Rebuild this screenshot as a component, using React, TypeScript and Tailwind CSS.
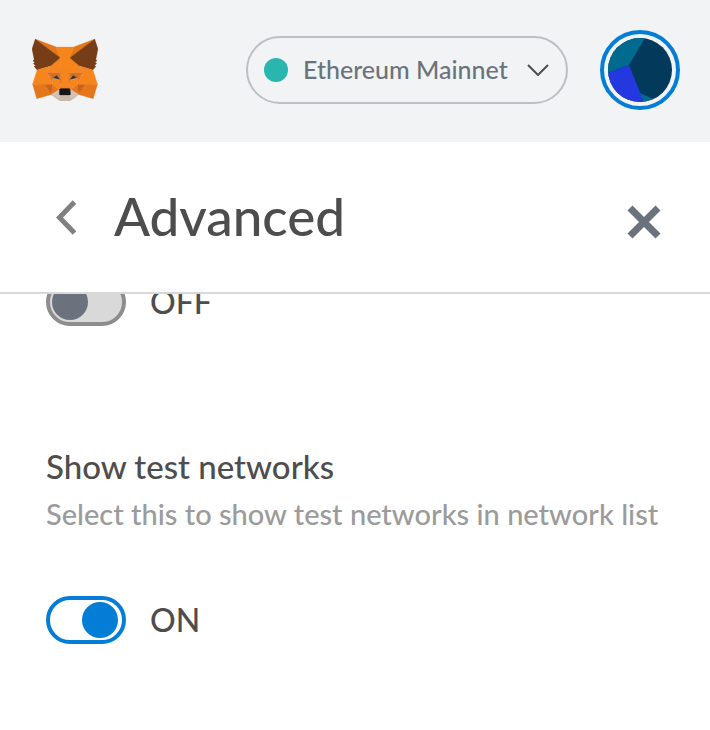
import { useState } from "react";

const foxShapes = [
	{ fill: "#e2761b", points: "274.1,35.5 174.6,109.4 193,65.8" },
	{ fill: "#e4761b", points: "44.4,35.5 143.1,110.1 125.6,65.8" },
	{ fill: "#e4761b", points: "238.3,206.8 211.8,247.4 268.5,263 284.8,207.7" },
	{ fill: "#e4761b", points: "33.9,207.7 50.1,263 106.8,247.4 80.3,206.8" },
	{ fill: "#f6851b", points: "103.6,138.2 87.8,162.1 144.1,164.6 142.1,104.1" },
	{ fill: "#f6851b", points: "214.9,138.2 175.9,103.4 174.6,164.6 230.8,162.1" },
	{ fill: "#e4761b", points: "106.8,247.4 140.6,230.9 111.4,208.1" },
	{ fill: "#e4761b", points: "177.9,230.9 211.8,247.4 207.1,208.1" },
	{ fill: "#d7c1b3", points: "211.8,247.4 177.9,225 180.6,253 180.3,262.3" },
	{ fill: "#d7c1b3", points: "106.8,247.4 138.3,262.3 138.1,253 140.6,225" },
	{ fill: "#cd6116", points: "106.8,247.4 111.6,206.8 80.3,207.7" },
	{ fill: "#cd6116", points: "207,206.8 211.8,247.4 238.3,207.7" },
	{ fill: "#dc6f1c", points: "230.8,162.1 174.6,164.6 179.8,193.5 188.1,176.1 208.1,185.2" },
	{ fill: "#dc6f1c", points: "110.6,185.2 130.6,176.1 138.8,193.5 144.1,164.6 87.8,162.1" },
	{ fill: "#e4751f", points: "87.8,162.1 111.4,208.1 110.6,185.2" },
	{ fill: "#e4751f", points: "208.1,185.2 207.1,208.1 230.8,162.1" },
	{ fill: "#f6851b", points: "179.8,193.5 173.1,227.6 177.9,230.9 207.1,208.1 208.1,185.2" },
	{ fill: "#f6851b", points: "110.6,185.2 111.4,208.1 140.6,230.9 145.4,227.6 138.8,193.5" },
	{ fill: "#a5663a", points: "140,192 108,184 128,172" },
	{ fill: "#a5663a", points: "178.6,192 190,172 210,184" },
	{ fill: "#233447", points: "137,189 116,182 128,176" },
	{ fill: "#233447", points: "181,189 190,176 202,182" },
	{
		fill: "#c9b8ab",
		points:
			"180.3,262.3 180.6,248 178.1,246 140.4,246 138.1,248 138.3,262.3 106.8,247.4 117.8,256.4 140.1,271.9 178.4,271.9 200.8,256.4 211.8,247.4",
	},
	{
		fill: "#763d16",
		points:
			"278.3,114.2 286.8,73.4 274.1,35.5 177.9,106.9 214.9,138.2 267.2,153.5 278.8,140 273.8,136.4 281.8,129.1 275.6,124.3 283.6,118.2",
	},
	{
		fill: "#763d16",
		points:
			"31.8,73.4 40.3,114.2 34.9,118.2 42.9,124.3 36.8,129.1 44.8,136.4 39.8,140 51.3,153.5 103.6,138.2 140.6,106.9 44.4,35.5",
	},
	{ fill: "#f6851b", points: "267.2,153.5 214.9,138.2 230.8,162.1 207.1,208.1 238.3,207.7 284.8,207.7" },
	{ fill: "#f6851b", points: "103.6,138.2 51.3,153.5 33.9,207.7 80.3,207.7 111.4,208.1 87.8,162.1" },
	{
		fill: "#f6851b",
		points:
			"174.6,164.6 177.9,106.9 193.1,65.8 125.6,65.8 140.6,106.9 144.1,164.6 145.3,182.8 145.4,227.6 173.1,227.6 173.3,182.8",
	},
	{ fill: "#e4751f", points: "144.1,164.6 138.8,193.5 145.4,227.6 146.9,182.7" },
	{ fill: "#e4751f", points: "174.6,164.6 171.9,182.6 173.1,227.6 179.8,193.5" },
	{
		fill: "#161616",
		points: "179,228 176,224 142,224 138,228 137,246 140,249 178,249 181,246",
	},
];

function FoxLogo() {
	return (
		<svg className="h-[62px] w-[66px]" viewBox="31.8 35.5 255 236.4" preserveAspectRatio="none" aria-hidden="true">
			{foxShapes.map((shape) => (
				<polygon key={shape.points} fill={shape.fill} stroke={shape.fill} strokeWidth="1" points={shape.points} />
			))}
		</svg>
	);
}

function AccountIcon() {
	return (
		<svg className="size-16 rounded-full" viewBox="0 0 64 64" aria-hidden="true">
			<rect width="64" height="64" fill="#03395b" />
			<path d="M0 0H37L21 27L0 35Z" fill="#016a8f" />
			<path d="M0 35L21 27L36 64H0Z" fill="#2438e0" />
			<path d="M32 55L45 61L42 64H36Z" fill="#016a8f" />
		</svg>
	);
}

function Toggle({ id, checked, onChange }: { id: string; checked: boolean; onChange: (checked: boolean) => void }) {
	return (
		<div className="flex items-center gap-6">
			<input
				id={id}
				type="checkbox"
				role="switch"
				checked={checked}
				onChange={(e) => onChange(e.target.checked)}
				className="flex h-12 w-20 cursor-pointer appearance-none items-center rounded-full border-4 border-[#8d8d8d] bg-[#d9d9d9] px-[2px] before:size-9 before:rounded-full before:bg-[#6a737d] checked:justify-end checked:border-[#037dd6] checked:bg-white checked:px-1 checked:before:bg-[#037dd6]"
			/>
			<label htmlFor={id} className="text-[32px] leading-12">
				{checked ? "ON" : "OFF"}
			</label>
		</div>
	);
}

export default function App() {
	const [showConversion, setShowConversion] = useState(false);
	const [showTestNetworks, setShowTestNetworks] = useState(true);

	return (
		<div className="flex h-screen flex-col overflow-hidden bg-white font-['Lato',sans-serif] font-medium text-[#4d4d4d]">
			<header className="flex shrink-0 items-center justify-between bg-[#f2f3f4] px-8 pt-[30px] pb-8">
				<a href="#home" aria-label="MetaMask">
					<FoxLogo />
				</a>
				<div className="-mr-[2px] flex items-center gap-8">
					<button
						type="button"
						className="flex h-[68px] w-[322px] items-center rounded-full border-2 border-[#bbc0c5] px-4"
					>
						<span className="size-6 rounded-full bg-[#29b6af]" />
						<span className="ml-[15px] flex-1 pb-[2px] text-left text-[25px] leading-8 whitespace-nowrap text-[#6a737d]">
							Ethereum Mainnet
						</span>
						<svg className="mr-px h-3 w-[22px]" viewBox="0 0 22 12" fill="none" stroke="#4d4d4d" strokeWidth="2" aria-hidden="true">
							<path d="M1 1L11 11L21 1" />
						</svg>
					</button>
					<button
						type="button"
						aria-label="Account menu"
						className="flex size-20 items-center justify-center rounded-full border-4 border-[#037dd6]"
					>
						<AccountIcon />
					</button>
				</div>
			</header>

			<div className="flex h-[152px] shrink-0 items-center border-b-2 border-[#d8d8d8] px-12">
				<button type="button" aria-label="Back" className="flex w-[66px] items-center pl-2">
					<svg className="h-9 w-5" viewBox="0 0 20 36" fill="none" stroke="#808080" strokeWidth="5" aria-hidden="true">
						<path d="M18.5 3L3.5 18.5L18.5 34" />
					</svg>
				</button>
				<h1 className="flex-1 pb-[2px] text-[53px] leading-[60px]">Advanced</h1>
				<button type="button" aria-label="Close" className="mt-[10px] mr-px flex size-[34px] items-center justify-center">
					<svg className="size-[34px]" viewBox="0 0 34 34" stroke="#6a737d" strokeWidth="7" aria-hidden="true">
						<path d="M3 3L31 31M31 3L3 31" />
					</svg>
				</button>
			</div>

			<main className="min-h-0 flex-1 overflow-hidden px-[46px]">
				<div className="-mt-4">
					<Toggle id="show-conversion" checked={showConversion} onChange={setShowConversion} />
				</div>
				<section className="pt-[116px]">
					<h2 className="text-[33px] leading-12">Show test networks</h2>
					<p className="text-[29px] leading-12 whitespace-nowrap text-[#9b9b9b]">
						Select this to show test networks in network list
					</p>
					<div className="pt-[58px]">
						<Toggle id="show-test-networks" checked={showTestNetworks} onChange={setShowTestNetworks} />
					</div>
				</section>
			</main>
		</div>
	);
}
